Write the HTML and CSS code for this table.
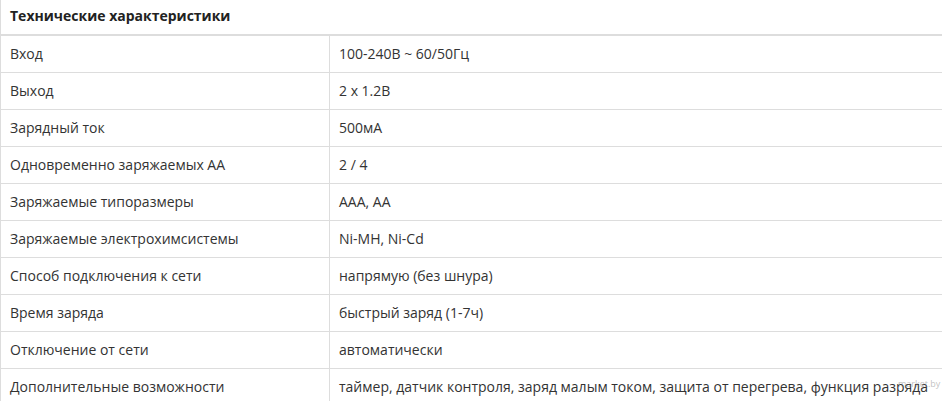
FILE: index.html
```html
<!DOCTYPE html>
<html lang="ru">
<head>
<meta charset="utf-8">
<link rel="stylesheet" href="styles.css">
</head>
<body>
<div class="wrap">
<table class="specs">
  <colgroup>
    <col class="col-name">
    <col class="col-value">
  </colgroup>
  <thead>
    <tr><th colspan="2" class="title">Технические характеристики</th></tr>
  </thead>
  <tbody>
    <tr><td>Вход</td><td>100-240В ~ 60/50Гц</td></tr>
    <tr><td>Выход</td><td>2 x 1.2В</td></tr>
    <tr><td>Зарядный ток</td><td>500мА</td></tr>
    <tr><td>Одновременно заряжаемых АА</td><td>2 / 4</td></tr>
    <tr><td>Заряжаемые типоразмеры</td><td>AAA, AA</td></tr>
    <tr><td>Заряжаемые электрохимсистемы</td><td>Ni-MH, Ni-Cd</td></tr>
    <tr><td>Способ подключения к сети</td><td>напрямую (без шнура)</td></tr>
    <tr><td>Время заряда</td><td>быстрый заряд (1-7ч)</td></tr>
    <tr><td>Отключение от сети</td><td>автоматически</td></tr>
    <tr><td>Дополнительные возможности</td><td>таймер, датчик контроля, заряд малым током, защита от перегрева, функция разряда</td></tr>
  </tbody>
</table>
<span class="watermark">market.by</span>
</div>
</body>
</html>
```
FILE: styles.css
```css
html, body {
  margin: 0;
  padding: 0;
  background: #fff;
}
body {
  font-family: "Open Sans", "Liberation Sans", sans-serif;
  font-size: 14px;
  line-height: 20px;
  color: #333;
  overflow: hidden;
}
.wrap {
  position: relative;
  width: 943px;
}
.specs {
  width: 943px;
  border-collapse: collapse;
  border-spacing: 0;
  table-layout: fixed;
}
.col-name {
  width: 329px;
}
.specs th,
.specs td {
  padding: 8px 8px 8px 9px;
  border: 1px solid #ddd;
  text-align: left;
  vertical-align: top;
  white-space: nowrap;
  overflow: hidden;
}
.specs .title {
  font-weight: 700;
  padding-top: 6px;
  border-top: none;
  border-bottom: 2px solid #ddd;
  color: #222;
}
.watermark {
  position: absolute;
  left: 898px;
  top: 379px;
  font-size: 9px;
  line-height: 10px;
  color: rgba(130, 130, 130, 0.5);
}
```
